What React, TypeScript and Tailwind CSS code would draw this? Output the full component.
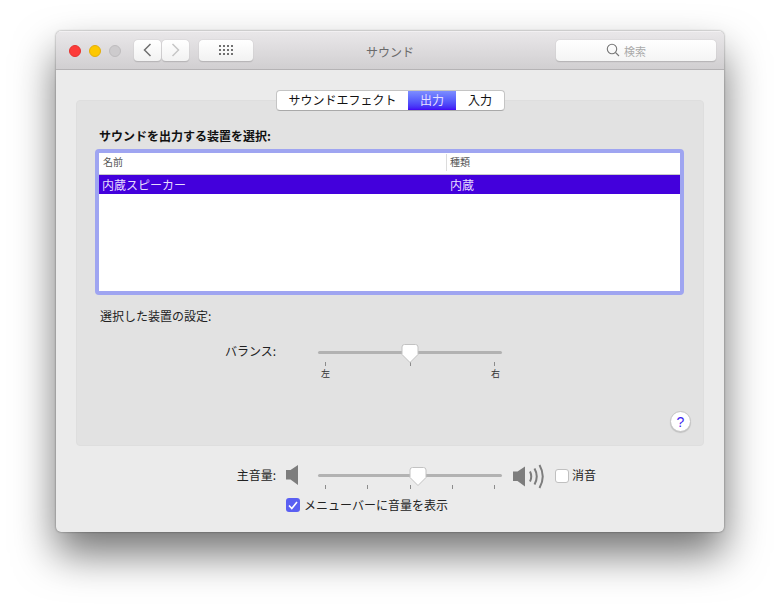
import React from "react";

const font = { fontFamily: '"Noto Sans CJK JP", "Liberation Sans", sans-serif' };

function Slider({ thumb, ticks }: { thumb: number; ticks: number[] }) {
  return (
    <div className="relative w-[184px] h-[30px]">
      <div className="absolute left-0 right-0 top-[7px] h-[3px] rounded-full bg-[#b2b2b2]" />
      {ticks.map((t) => (
        <div key={t} className="absolute top-[18px] w-px h-[4px] bg-[#8c8c8c]" style={{ left: t }} />
      ))}
      <svg className="absolute top-0" style={{ left: thumb - 9 }} width="18" height="20" viewBox="0 0 18 20">
        <path d="M3.5.5h11a2.5 2.5 0 0 1 2.5 2.5v7.5L9 18.5 1 10.5V3A2.5 2.5 0 0 1 3.5.5z" fill="#fff" stroke="#c2c2c2" strokeWidth="1" />
      </svg>
    </div>
  );
}

function SpeakerBody() {
  return <path d="M0 5h4.5L12 0v20l-7.5-5.5H0z" fill="#7d7d7d" />;
}

export default function App() {
  return (
    <div className="w-[780px] h-[612px] bg-white overflow-hidden pl-[56px] pt-[31px] text-[12px] text-[#1a1a1a] leading-none" style={font}>
      <div className="w-[668px] h-[501px] rounded-[5px] bg-[#ebebeb] overflow-hidden shadow-[0_22px_42px_rgba(0,0,0,0.55),0_0_2px_rgba(0,0,0,0.5)] flex flex-col">
        {/* title bar */}
        <div className="h-[39px] shrink-0 bg-gradient-to-b from-[#e9e7e9] to-[#d1cfd1] border-b border-[#b5b3b5] border-t border-t-[#f2f0f2] flex items-center relative">
          <div className="ml-[13px] flex gap-[8px]">
            <div className="w-[12px] h-[12px] rounded-full bg-[#fd3b3a] border border-[#e5312f]" />
            <div className="w-[12px] h-[12px] rounded-full bg-[#fdc800] border border-[#e3ae0a]" />
            <div className="w-[12px] h-[12px] rounded-full bg-[#cdcbcd] border border-[#bebcbe]" />
          </div>
          <div className="ml-[13px] flex gap-px">
            <div className="w-[27px] h-[22px] rounded-[4px] bg-gradient-to-b from-white to-[#f2f2f2] border-b border-[#b8b6b8] shadow-[0_0_1px_rgba(0,0,0,0.3)] flex items-center justify-center">
              <svg width="9" height="14" viewBox="0 0 9 14" fill="none" stroke="#6f6f6f" strokeWidth="1.5"><path d="M7.5 1 1.5 7l6 6" /></svg>
            </div>
            <div className="w-[27px] h-[22px] rounded-[4px] bg-gradient-to-b from-white to-[#f2f2f2] border-b border-[#b8b6b8] shadow-[0_0_1px_rgba(0,0,0,0.3)] flex items-center justify-center">
              <svg width="9" height="14" viewBox="0 0 9 14" fill="none" stroke="#c6c6c6" strokeWidth="1.5"><path d="M1.5 1l6 6-6 6" /></svg>
            </div>
          </div>
          <div className="ml-[10px] w-[54px] h-[22px] rounded-[4px] bg-gradient-to-b from-white to-[#f2f2f2] border-b border-[#b8b6b8] shadow-[0_0_1px_rgba(0,0,0,0.3)] flex items-center justify-center">
            <svg width="14" height="10" viewBox="0 0 14 10" fill="#707070">
              {[0, 4, 8].map((y) => [0, 4, 8, 12].map((x) => <rect key={`${x}-${y}`} x={x} y={y} width="2" height="2" />))}
            </svg>
          </div>
          <div className="absolute left-[310px] top-[14px] text-[12px] text-[#6a6a6a]">サウンド</div>
          <div className="ml-auto mr-[8px] w-[160px] h-[22px] rounded-[4px] bg-gradient-to-b from-white to-[#f4f4f4] border-b border-[#b8b6b8] shadow-[0_0_1px_rgba(0,0,0,0.3)] flex items-center pl-[50px] gap-[4px]">
            <svg width="14" height="14" viewBox="0 0 14 14" fill="none" stroke="#777" strokeWidth="1.1"><circle cx="6" cy="6" r="4.7" /><path d="M9.5 9.5 13 13" /></svg>
            <span className="text-[11px] text-[#aaa] mt-[2px]">検索</span>
          </div>
        </div>

        {/* body */}
        <div className="flex-1 relative px-[20px] pt-[30px]">
          <div className="relative h-[346px] rounded-[4px] bg-[#e2e2e2] border border-[#dedede] pt-[29px] px-[20px]">
            {/* tabs */}
            <div className="absolute left-[199px] top-[-11px] h-[21px] w-[229px] flex rounded-[4px] bg-white overflow-hidden border border-[#c4c4c4] border-b-[#a9a9a9] text-[12px] text-[#111]">
              <div className="w-[131px] flex items-center justify-center pb-[2px]">サウンドエフェクト</div>
              <div className="w-[48px] flex items-center justify-center pb-[2px] text-[#e6e0ff] bg-gradient-to-b from-[#7d8dff] to-[#4200f5]">出力</div>
              <div className="flex-1 flex items-center justify-center pb-[2px]">入力</div>
            </div>
            <div className="font-bold text-[12px] text-[#111] pl-[2px] h-[14px]">サウンドを出力する装置を選択:</div>
            {/* table */}
            <div className="mt-[5px] -ml-[2px] w-[589px] h-[146px] border-[4px] border-[#9fa5f1] rounded-[4px] bg-white">
              <div className="h-[22px] flex items-center border-b border-[#c9c9c9] text-[10px] text-[#555] pb-[3px]">
                <div className="w-[348px] h-[17px] flex items-center pl-[4px] border-r border-[#dcdcdc]">名前</div>
                <div className="pl-[3px]">種類</div>
              </div>
              <div className="h-[19px] flex items-center bg-[#4300dc] text-[12px] text-[#e6dcff]">
                <div className="w-[348px] pl-[3px]">内蔵スピーカー</div>
                <div className="pl-[3px]">内蔵</div>
              </div>
            </div>
            <div className="mt-[15px] pl-[3px] text-[12px] text-[#222] h-[14px]">選択した装置の設定:</div>
            {/* balance */}
            <div className="mt-[20px] flex">
              <div className="w-[179px] text-right text-[12px] text-[#222] pt-[1px]">バランス:</div>
              <div className="ml-[42px] relative">
                <Slider thumb={92} ticks={[7, 92, 176]} />
                <span className="absolute left-[3px] top-[25px] text-[9px] text-[#333]">左</span>
                <span className="absolute left-[173px] top-[25px] text-[9px] text-[#333]">右</span>
              </div>
            </div>
            {/* help */}
            <div className="absolute left-[593px] top-[310px] w-[21px] h-[21px] rounded-full bg-white border border-[#c4c4c4] shadow-[0_1px_1px_rgba(0,0,0,0.15)] flex items-center justify-center text-[14px] text-[#3d1ff0]" style={{ fontFamily: '"Liberation Sans", sans-serif' }}>?</div>
          </div>

          {/* volume */}
          <div className="mt-[18px] flex items-start">
            <div className="w-[200px] text-right text-[12px] text-[#222] pt-[5px]">主音量:</div>
            <svg className="ml-[10px] mt-[1px]" width="13" height="20" viewBox="0 0 13 20"><SpeakerBody /></svg>
            <div className="ml-[19px] mt-[3px]"><Slider thumb={100} ticks={[7, 49, 92, 134, 176]} /></div>
            <svg className="ml-[11px]" width="32" height="25" viewBox="0 0 32 25" fill="none">
              <g transform="translate(0 2.5)"><SpeakerBody /></g>
              <path d="M17 7.5q2.5 5 0 10M21.5 4.5q4.5 8 0 16M26.5 1q6.5 11.5 0 23" stroke="#7d7d7d" strokeWidth="2" />
            </svg>
            <div className="ml-[10px] mt-[5px] w-[14px] h-[14px] rounded-[3px] bg-white border border-[#c0c0c0]" />
            <span className="ml-[3px] mt-[5px] text-[12px] text-[#222]">消音</span>
          </div>
          <div className="mt-[1px] ml-[210px] flex items-center">
            <div className="w-[14px] h-[14px] rounded-[3px] bg-[#5a5ff2] flex items-center justify-center">
              <svg width="10" height="9" viewBox="0 0 10 9" fill="none" stroke="#fff" strokeWidth="1.6"><path d="M1 4.5 3.8 7.5 9 1" /></svg>
            </div>
            <span className="ml-[4px] text-[12px] text-[#222]">メニューバーに音量を表示</span>
          </div>
        </div>
      </div>
    </div>
  );
}
